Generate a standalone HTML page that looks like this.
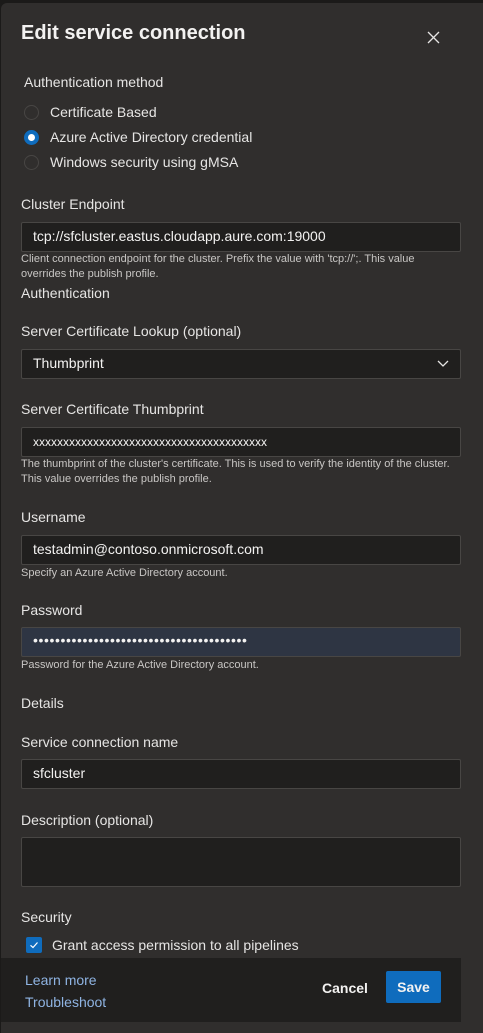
<!DOCTYPE html>
<html><head><meta charset="utf-8"><style>
*{margin:0;padding:0;box-sizing:border-box}
body{width:483px;height:1028px;background:#1b1a19;font-family:"Segoe UI","Liberation Sans",sans-serif;color:#f3f2f1;position:relative;overflow:hidden}
.panel{position:absolute;left:1px;top:3px;width:482px;height:1030px;background:#302e2d;border-radius:6px 0 0 0}
.a{position:absolute;white-space:nowrap}
.l{font-size:14px;color:#e6e5e4}
.h{font-size:11px;color:#c8c6c4;line-height:15px;white-space:normal}
.in{position:absolute;left:21px;width:440px;height:30px;background:#201f1e;border:1px solid #484644;border-radius:2px;font-size:14px;padding:5px 11px;color:#f3f2f1}
.r{position:absolute;left:24px;width:15px;height:15px;border-radius:50%;border:1px solid #484644}
</style></head><body>
<div class="panel"></div>
<div class="a" style="left:21px;top:22px;font-size:20px;font-weight:bold">Edit service connection</div>
<svg class="a" style="left:427px;top:31px" width="13" height="13" viewBox="0 0 13 13"><path d="M1 1L12 12M12 1L1 12" stroke="#e6e5e4" stroke-width="1.3"/></svg>
<div class="a l" style="left:24px;top:74px">Authentication method</div>
<div class="r" style="top:105px"></div>
<div class="a l" style="left:50px;top:104px">Certificate Based</div>
<div class="r" style="top:130px;border:4px solid #0f6cbd;background:#fff"></div>
<div class="a l" style="left:50px;top:129px">Azure Active Directory credential</div>
<div class="r" style="top:155px"></div>
<div class="a l" style="left:50px;top:154px">Windows security using gMSA</div>

<div class="a l" style="left:21px;top:196px">Cluster Endpoint</div>
<div class="in" style="top:222px">tcp://sfcluster.eastus.cloudapp.aure.com:19000</div>
<div class="a h" style="left:21px;top:252px;width:440px">Client connection endpoint for the cluster. Prefix the value with 'tcp://';. This value overrides the publish profile.</div>
<div class="a l" style="left:21px;top:285px">Authentication</div>
<div class="a l" style="left:21px;top:323px">Server Certificate Lookup (optional)</div>
<div class="in" style="top:349px">Thumbprint</div>
<svg class="a" style="left:437px;top:360px" width="12" height="8" viewBox="0 0 12 8"><path d="M1 1L6 6L11 1" stroke="#e6e5e4" stroke-width="1.3" fill="none"/></svg>
<div class="a l" style="left:21px;top:401px">Server Certificate Thumbprint</div>
<div class="in" style="top:427px;font-size:12px;padding-top:7px">xxxxxxxxxxxxxxxxxxxxxxxxxxxxxxxxxxxxxxx</div>
<div class="a h" style="left:21px;top:457px;width:440px">The thumbprint of the cluster's certificate. This is used to verify the identity of the cluster. This value overrides the publish profile.</div>
<div class="a l" style="left:21px;top:509px">Username</div>
<div class="in" style="top:535px">testadmin@contoso.onmicrosoft.com</div>
<div class="a h" style="left:21px;top:566px">Specify an Azure Active Directory account.</div>
<div class="a l" style="left:21px;top:602px">Password</div>
<div class="in" style="top:627px;background:#2e3543;font-size:14px;letter-spacing:0.6px;padding-top:4px">•••••••••••••••••••••••••••••••••••••••</div>
<div class="a h" style="left:21px;top:658px">Password for the Azure Active Directory account.</div>
<div class="a l" style="left:21px;top:695px">Details</div>
<div class="a l" style="left:21px;top:734px">Service connection name</div>
<div class="in" style="top:759px">sfcluster</div>
<div class="a l" style="left:21px;top:812px">Description (optional)</div>
<div class="in" style="top:837px;height:50px"></div>
<div class="a l" style="left:21px;top:909px">Security</div>
<div class="a" style="left:26px;top:937px;width:16px;height:16px;background:#0f6cbd;border-radius:2px"><svg width="16" height="16" viewBox="0 0 16 16"><path d="M4.5 8.3L7 10.5L11.5 5.5" stroke="#fff" stroke-width="1.2" fill="none"/></svg></div>
<div class="a l" style="left:52px;top:937px">Grant access permission to all pipelines</div>
<div class="a" style="left:1px;top:958px;width:460px;height:64px;background:#201f1e"></div>
<div class="a" style="left:25px;top:972px;font-size:14px;color:#8fb4e3">Learn more</div>
<div class="a" style="left:25px;top:994px;font-size:14px;color:#8fb4e3">Troubleshoot</div>
<div class="a" style="left:322px;top:980px;font-size:14px;font-weight:bold">Cancel</div>
<div class="a" style="left:386px;top:971px;width:55px;height:32px;background:#0f6cbd;border-radius:2px;font-size:14px;font-weight:bold;text-align:center;line-height:33px">Save</div>
</body></html>
